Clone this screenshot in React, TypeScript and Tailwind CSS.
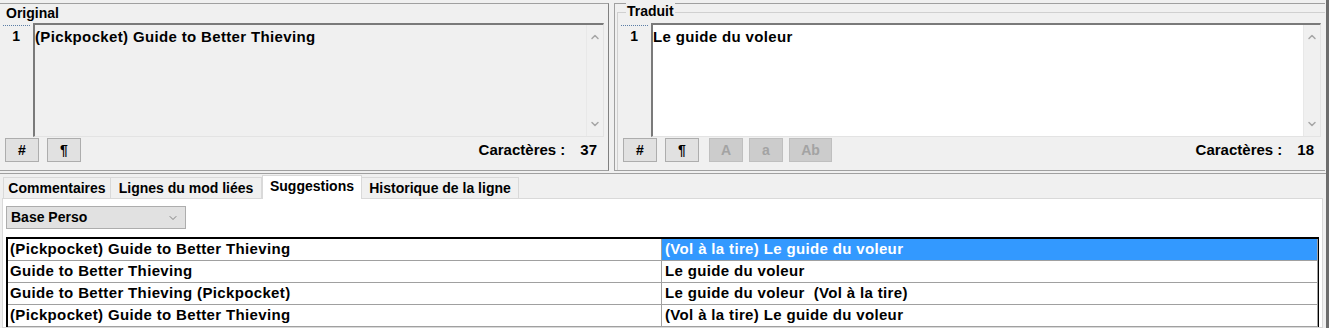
import { ChevronDown, ChevronUp } from "lucide-react";

type Row = { source: string; target: string };

const rows: Row[] = [
  { source: "(Pickpocket) Guide to Better Thieving", target: "(Vol à la tire) Le guide du voleur" },
  { source: "Guide to Better Thieving", target: "Le guide du voleur" },
  { source: "Guide to Better Thieving (Pickpocket)", target: "Le guide du voleur  (Vol à la tire)" },
  { source: "(Pickpocket) Guide to Better Thieving", target: "(Vol à la tire) Le guide du voleur" },
];

function Editor({ text, readOnly }: { text: string; readOnly?: boolean }) {
  return (
    <div className="flex h-[114px]">
      <div className="relative w-[33px] shrink-0">
        <div className="absolute left-[3px] top-[2px] w-[27px] border-t border-dotted border-[#5b7ea6]" />
        <div className="pr-[13px] pt-[5px] text-right text-[14px] leading-[16px]">1</div>
      </div>
      <div
        className={
          "flex flex-1 border-l-2 border-t-2 border-[#7a7a7a] border-r border-b border-r-[#e3e3e3] border-b-[#e3e3e3] " +
          (readOnly ? "bg-[#f0f0f0]" : "bg-white")
        }
      >
        <div className="flex-1 pt-[3px] text-[15px] leading-[17px] tracking-[0.35px] whitespace-pre">{text}</div>
        <div className="flex w-[17px] flex-col items-center justify-between border-l border-[#e8e8e8] bg-[#f0f0f0] py-[6px]">
          <ChevronUp className="size-[12px] text-[#a6a6a6]" strokeWidth={3} />
          <ChevronDown className="size-[12px] text-[#a6a6a6]" strokeWidth={3} />
        </div>
      </div>
    </div>
  );
}

function Btn({ label, disabled, w = "w-[34px]", ml }: { label: string; disabled?: boolean; w?: string; ml: string }) {
  return (
    <div
      className={
        `${w} ${ml} flex h-[24px] items-center justify-center border text-[14px] ` +
        (disabled ? "border-[#bfbfbf] bg-[#cccccc] text-[#a3a3a3]" : "border-[#adadad] bg-[#e1e1e1] text-black")
      }
    >
      {label}
    </div>
  );
}

function Count({ n }: { n: string }) {
  return (
    <div className="ml-auto flex items-center pr-[11px] text-[15px]">
      <span>Caractères :</span>
      <span className="ml-[15px]">{n}</span>
    </div>
  );
}

export default function App() {
  return (
    <div className="flex h-[328px] w-[1329px] flex-col overflow-hidden border-r-[3px] border-[#6d6d6d] bg-[#f0f0f0] font-['Liberation_Sans',Arial,sans-serif] text-[14px] font-bold text-black">
      <div className="flex h-[171px] shrink-0 pt-[3px]">
        {/* Original */}
        <div className="flex w-[609px] flex-col border-t border-r border-b border-[#a0a0a0] border-r-[#808080]">
          <div className="h-[19px] pl-[6px] pt-[1px] leading-[16px]">Original</div>
          <div className="pr-[4px]">
            <Editor text="(Pickpocket) Guide to Better Thieving" readOnly />
          </div>
          <div className="mt-[1px] flex items-center">
            <Btn label="#" ml="ml-[5px]" />
            <Btn label="¶" ml="ml-[8px]" />
            <Count n="37" />
          </div>
        </div>

        {/* Traduit */}
        <div className="ml-[5px] flex w-[711px] flex-col border-l border-t border-b border-[#a0a0a0] pl-[2px]">
          <div className="relative mt-[8px] flex flex-1 flex-col border-l border-t border-[#d0d0d0]">
            <div className="absolute -top-[10px] left-[8px] bg-[#f0f0f0] px-[1px] leading-[16px]">Traduit</div>
            <div className="pt-[10px] pr-[4px]">
              <Editor text="Le guide du voleur" />
            </div>
            <div className="mt-[1px] flex items-center">
              <Btn label="#" ml="ml-[5px]" />
              <Btn label="¶" ml="ml-[8px]" />
              <Btn label="A" ml="ml-[10px]" disabled />
              <Btn label="a" ml="ml-[6px]" disabled />
              <Btn label="Ab" ml="ml-[6px]" w="w-[43px]" disabled />
              <Count n="18" />
            </div>
          </div>
        </div>
      </div>

      {/* Bottom tabs */}
      <div className="mt-[2px] flex flex-1 flex-col border-t border-[#a0a0a0] pr-[3px]">
        <div className="flex h-[24px] items-end pl-[3px]">
          <div className="flex h-[21px] w-[108px] items-center justify-center border border-b-0 border-[#d9d9d9]">Commentaires</div>
          <div className="flex h-[21px] w-[151px] items-center justify-center border border-b-0 border-l-0 border-[#d9d9d9]">Lignes du mod liées</div>
          <div className="relative -mb-px flex h-[24px] w-[100px] items-center justify-center border border-b-0 border-[#d9d9d9] bg-white pb-[2px]">Suggestions</div>
          <div className="flex h-[21px] w-[157px] items-center justify-center border border-b-0 border-l-0 border-[#d9d9d9]">Historique de la ligne</div>
        </div>
        <div className="ml-[2px] flex-1 border border-[#d9d9d9] bg-white pl-[3px] pr-[3px] pt-[7px]">
          <div className="flex h-[23px] w-[180px] items-center justify-between border border-[#adadad] bg-[#e1e1e1] pl-[4px] pr-[6px]">
            <span>Base Perso</span>
            <ChevronDown className="size-[12px] text-[#606060]" strokeWidth={1.5} />
          </div>
          <div className="mt-[8px] border-l-2 border-t-2 border-r border-black">
            <div className="border-r border-[#a0a0a0] text-[15px] tracking-[0.35px]">
              {rows.map((r, i) => (
                <div key={i} className="flex h-[22px] border-b border-[#a0a0a0]">
                  <div className="flex w-[654px] items-center border-r border-[#a0a0a0] pl-[2px]">{r.source}</div>
                  <div
                    className={
                      "flex flex-1 items-center whitespace-pre pl-[3px] " +
                      (i === 0 ? "bg-[#3399ff] text-white" : "")
                    }
                  >
                    {r.target}
                  </div>
                </div>
              ))}
            </div>
          </div>
        </div>
      </div>
    </div>
  );
}
